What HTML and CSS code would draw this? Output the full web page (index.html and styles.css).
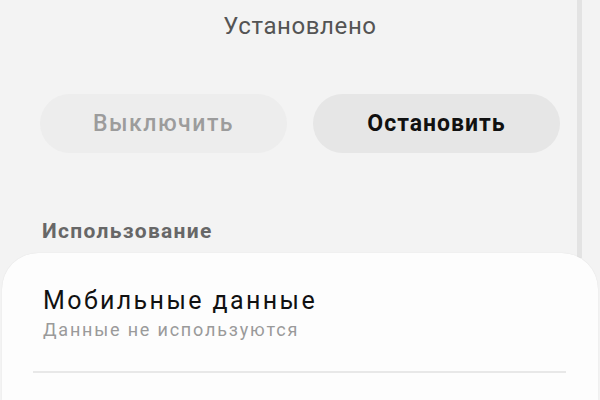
FILE: index.html
```html
<!DOCTYPE html>
<html lang="ru">
<head>
<meta charset="utf-8">
<link rel="stylesheet" href="styles.css">
</head>
<body>
<div class="screen">
  <div class="scroll-track"></div>
  <div class="status">Установлено</div>
  <div class="actions">
    <button class="btn btn-disabled">Выключить</button>
    <button class="btn btn-primary">Остановить</button>
  </div>
  <div class="section-label">Использование</div>
  <div class="card">
    <div class="item">
      <div class="item-title">Мобильные данные</div>
      <div class="item-sub">Данные не используются</div>
    </div>
    <div class="divider"></div>
  </div>
</div>
</body>
</html>
```
FILE: styles.css
```css
html, body {
  margin: 0;
  padding: 0;
}
body {
  background: #f3f3f3;
  font-family: Roboto, "Noto Sans", sans-serif;
}
.screen {
  position: relative;
  width: 600px;
  height: 400px;
  overflow: hidden;
  display: flex;
  flex-direction: column;
}
.scroll-track {
  position: absolute;
  left: 577px;
  top: 0;
  width: 5px;
  height: 258px;
  background: #e3e3e3;
}
.status {
  margin-top: 11px;
  text-align: center;
  font-size: 24px;
  letter-spacing: 0.6px;
  line-height: 30px;
  color: #545454;
}
.actions {
  display: flex;
  gap: 26px;
  padding: 0 40px;
  margin-top: 53px;
}
.btn {
  flex: 1;
  height: 59px;
  border: none;
  border-radius: 30px;
  font-family: Roboto, "Noto Sans", sans-serif;
  font-size: 23px;
  padding: 0;
}
.btn-disabled {
  background: #ededed;
  color: #9c9c9c;
  font-weight: 500;
  letter-spacing: 1.5px;
}
.btn-primary {
  background: #e6e6e6;
  color: #111111;
  font-weight: 700;
  letter-spacing: 1px;
}
.section-label {
  margin-top: 66px;
  padding-left: 42px;
  font-size: 21px;
  font-weight: 700;
  letter-spacing: 1.3px;
  line-height: 24px;
  color: #676767;
}
.card {
  position: relative;
  z-index: 1;
  margin: 10px 2px 0;
  background: #fdfdfd;
  border-radius: 36px 36px 0 0;
  box-shadow: 0 0 1px rgba(0, 0, 0, 0.12);
  flex: 1;
}
.item {
  padding: 33px 0 0 41px;
}
.item-title {
  font-size: 25px;
  letter-spacing: 2.4px;
  line-height: 30px;
  color: #111111;
}
.item-sub {
  margin-top: 2px;
  font-size: 18px;
  letter-spacing: 1.8px;
  line-height: 24px;
  color: #9a9a9a;
}
.divider {
  margin: 29px 32px 0 31px;
  height: 2px;
  background: #e8e8e8;
}
```
